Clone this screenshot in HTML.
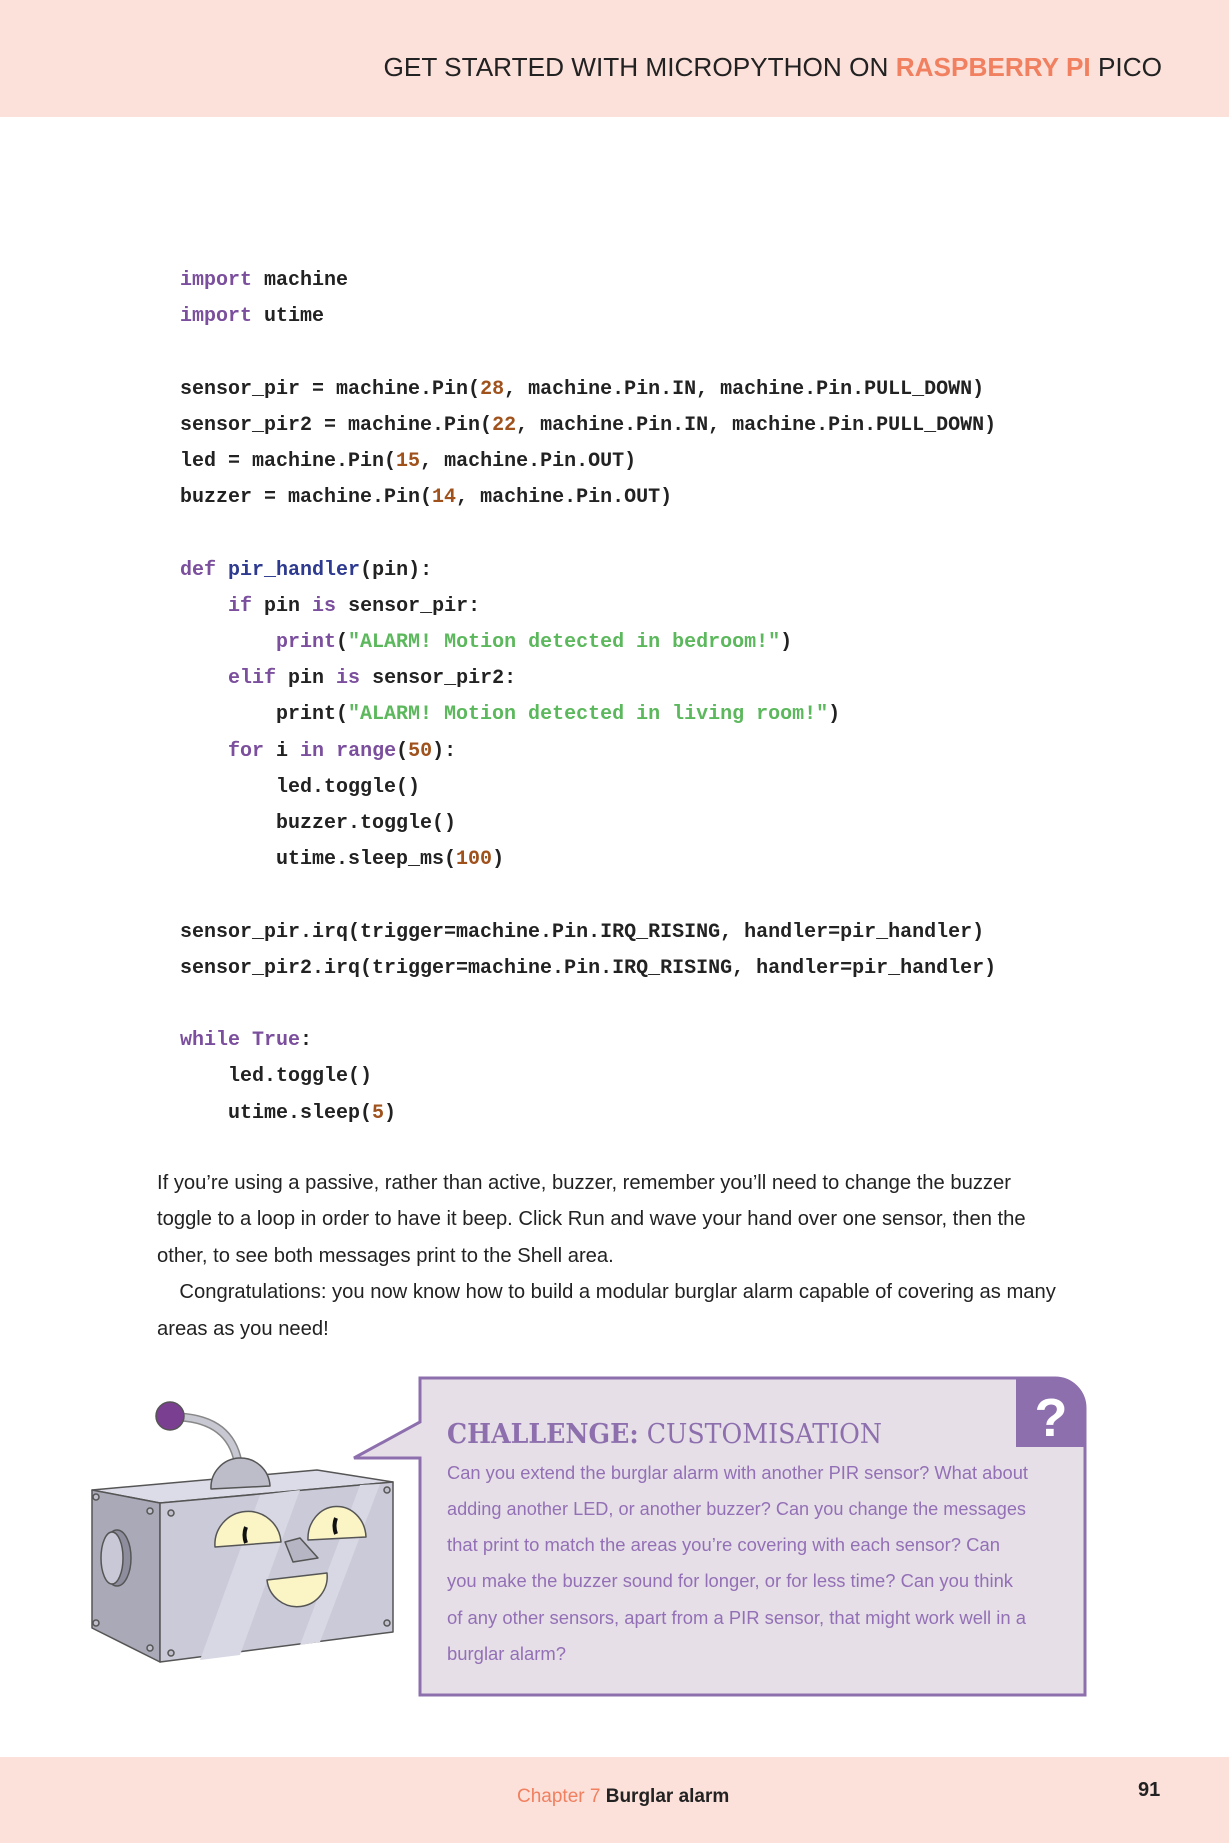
<!DOCTYPE html>
<html><head><meta charset="utf-8"><style>
*{margin:0;padding:0;box-sizing:border-box}
body{width:1229px;height:1843px;background:#fff;position:relative;overflow:hidden;font-family:"Liberation Sans",sans-serif}
.hdr{position:absolute;left:0;top:0;width:1229px;height:117px;background:#fce0da}
.hdr div{position:absolute;right:67px;top:52px;font-size:26.2px;color:#222;white-space:nowrap}
.or{color:#f0805f;font-weight:bold}
.code{position:absolute;left:180px;font-family:"Liberation Mono",monospace;font-size:20px;font-weight:bold;color:#222;white-space:pre;line-height:36.2px}
.k{color:#7b4f9d}.f{color:#2d3a8f}.n{color:#a0521d}.s{color:#5cb85c}
.p{position:absolute;left:157px;width:912px;font-size:20.2px;line-height:36.4px;color:#222}
.ft{position:absolute;left:0;top:1757px;width:1229px;height:86px;background:#fce0da}
</style></head><body>
<div class="hdr"><div>GET STARTED WITH MICROPYTHON ON <span class="or">RASPBERRY PI</span> PICO</div></div>
<div class="code" style="top:263px"><span class="k">import</span> machine
<span class="k">import</span> utime

sensor_pir = machine.Pin(<span class="n">28</span>, machine.Pin.IN, machine.Pin.PULL_DOWN)
sensor_pir2 = machine.Pin(<span class="n">22</span>, machine.Pin.IN, machine.Pin.PULL_DOWN)
led = machine.Pin(<span class="n">15</span>, machine.Pin.OUT)
buzzer = machine.Pin(<span class="n">14</span>, machine.Pin.OUT)

<span class="k">def</span> <span class="f">pir_handler</span>(pin):
    <span class="k">if</span> pin <span class="k">is</span> sensor_pir:
        <span class="k">print</span>(<span class="s">"ALARM! Motion detected in bedroom!"</span>)
    <span class="k">elif</span> pin <span class="k">is</span> sensor_pir2:
        print(<span class="s">"ALARM! Motion detected in living room!"</span>)
    <span class="k">for</span> i <span class="k">in</span> <span class="k">range</span>(<span class="n">50</span>):
        led.toggle()
        buzzer.toggle()
        utime.sleep_ms(<span class="n">100</span>)

sensor_pir.irq(trigger=machine.Pin.IRQ_RISING, handler=pir_handler)
sensor_pir2.irq(trigger=machine.Pin.IRQ_RISING, handler=pir_handler)

<span class="k">while</span> <span class="k">True</span>:
    led.toggle()
    utime.sleep(<span class="n">5</span>)</div>
<div class="p" style="top:1165px">If you’re using a passive, rather than active, buzzer, remember you’ll need to change the buzzer toggle to a loop in order to have it beep. Click Run and wave your hand over one sensor, then the other, to see both messages print to the Shell area.<br>&nbsp;&nbsp;&nbsp;&nbsp;Congratulations: you now know how to build a modular burglar alarm capable of covering as many areas as you need!</div>

<svg style="position:absolute;left:0;top:0" width="1229" height="1843">
<path d="M420 1378 H1055 A30 30 0 0 1 1085 1408 V1695 H420 V1458 H354 L420 1422 Z" fill="#e6dfe8" stroke="#8e6fae" stroke-width="3"/>
<path d="M1016 1377 H1055 A30 30 0 0 1 1086 1408 V1447 H1016 Z" fill="#8e6fae"/>
<text x="1051" y="1436" font-family="Liberation Sans" font-weight="bold" font-size="54" fill="#fff" text-anchor="middle">?</text>
<text x="447" y="1443" font-family="DejaVu Serif, serif" font-size="27" fill="#8e6fae" textLength="435" lengthAdjust="spacingAndGlyphs"><tspan font-weight="bold">CHALLENGE:</tspan> CUSTOMISATION</text>
<g font-family="Liberation Sans" font-size="18" fill="#9370b5">
<text x="447" y="1479" textLength="581" lengthAdjust="spacingAndGlyphs">Can you extend the burglar alarm with another PIR sensor? What about</text>
<text x="447" y="1515" textLength="579" lengthAdjust="spacingAndGlyphs">adding another LED, or another buzzer? Can you change the messages</text>
<text x="447" y="1551" textLength="553" lengthAdjust="spacingAndGlyphs">that print to match the areas you’re covering with each sensor? Can</text>
<text x="447" y="1587" textLength="566" lengthAdjust="spacingAndGlyphs">you make the buzzer sound for longer, or for less time? Can you think</text>
<text x="447" y="1624" textLength="579" lengthAdjust="spacingAndGlyphs">of any other sensors, apart from a PIR sensor, that might work well in a</text>
<text x="447" y="1660" textLength="119" lengthAdjust="spacingAndGlyphs">burglar alarm?</text>
</g>
<g stroke="#555" stroke-width="1.5" stroke-linejoin="round">
<path d="M180 1417 Q230 1420 238 1462" fill="none" stroke="#888" stroke-width="9"/>
<path d="M180 1417 Q230 1420 238 1462" fill="none" stroke="#c8c8d2" stroke-width="6"/>
<circle cx="170" cy="1416" r="14" fill="#7b3f91"/>
<path d="M92 1490 L317 1470 L393 1482 L160 1503 Z" fill="#dcdce8"/>
<path d="M211 1489 A29 29 0 0 1 270 1486 Z" fill="#bdbdca"/>
<path d="M92 1490 L160 1503 L160 1662 L92 1628 Z" fill="#a9a9b8"/>
<path d="M160 1503 L393 1482 L393 1632 L160 1662 Z" fill="#cacad8"/>
<path d="M200 1660 L260 1495 L300 1490 L240 1655 Z" fill="#d8d8e4" stroke="none"/>
<path d="M300 1645 L360 1485 L380 1484 L320 1642 Z" fill="#d8d8e4" stroke="none"/>
<ellipse cx="117" cy="1558" rx="14" ry="28" fill="#8d8d9e"/>
<ellipse cx="112" cy="1558" rx="11" ry="26" fill="#c8c8d6"/>
<path d="M215 1547 A33 33 0 0 1 281 1542 Z" fill="#fbf5c6"/>
<path d="M308 1540 A29 32 0 0 1 366 1537 Z" fill="#fbf5c6"/>
<path d="M246 1527 q-3 8 0 16" stroke="#111" stroke-width="4" fill="none"/>
<path d="M336 1518 q-3 8 0 16" stroke="#111" stroke-width="4" fill="none"/>
<path d="M285 1542 L300 1538 L318 1558 L293 1562 Z" fill="#b5b5c4"/>
<path d="M267 1580 L327 1573 A30 30 0 0 1 267 1580 Z" fill="#fbf5c6"/>
<g fill="#c0c0cc"><circle cx="96" cy="1497" r="3"/><circle cx="150" cy="1511" r="3"/><circle cx="171" cy="1513" r="3"/><circle cx="387" cy="1490" r="3"/><circle cx="96" cy="1623" r="3"/><circle cx="150" cy="1648" r="3"/><circle cx="171" cy="1653" r="3"/><circle cx="387" cy="1623" r="3"/></g>
</g>
</svg>
<div class="ft"></div>
<div style="position:absolute;left:517px;top:1786px;font-size:19px;white-space:nowrap"><span style="color:#f0805f">Chapter 7</span> <b style="color:#222">Burglar alarm</b></div>
<div style="position:absolute;left:1138px;top:1779px;font-size:20px;font-weight:bold;color:#222">91</div>
</body></html>
